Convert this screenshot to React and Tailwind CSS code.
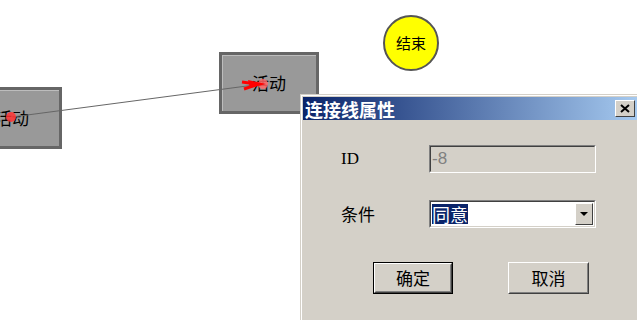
import React from 'react';

const cjk = { fontFamily: '"Noto Sans CJK SC", "Liberation Sans", sans-serif' };

const Node = ({ className }) => (
  <div
    className={`absolute w-[100px] h-[62px] bg-[#999999] border-[3px] border-[#666666] shadow-[inset_1px_1px_0_#bdbdbd] flex items-center justify-center text-[17px] text-black ${className}`}
    style={cjk}
  >
    活动
  </div>
);

const Sunken = ({ className, children }) => (
  <div className={`border border-t-[#808080] border-l-[#808080] border-b-white border-r-white ${className}`}>
    <div className="h-full w-full border border-t-[#404040] border-l-[#404040] border-b-[#d4d0c8] border-r-[#d4d0c8] flex items-center">
      {children}
    </div>
  </div>
);

const Button = ({ children, isDefault, className }) => (
  <div className={`h-[32px] ${isDefault ? 'border border-black' : ''} ${className}`}>
    <div className="h-full w-full border border-t-white border-l-white border-b-[#404040] border-r-[#404040]">
      <div className="h-full w-full border border-t-[#d4d0c8] border-l-[#d4d0c8] border-b-[#808080] border-r-[#808080] flex items-center justify-center text-[17px] text-black">
        {children}
      </div>
    </div>
  </div>
);

export default function App() {
  return (
    <div className="relative w-[637px] h-[320px] overflow-hidden bg-white" style={cjk}>
      <Node className="left-[-38px] top-[87px]" />
      <Node className="left-[219px] top-[52px]" />

      <svg className="absolute left-0 top-0" width="637" height="320">
        <line x1="12" y1="117" x2="262" y2="84" stroke="#666" strokeWidth="1" />
        <circle cx="11" cy="117" r="5" fill="#ff3333" opacity="0.85" />
        <circle cx="263" cy="84" r="5" fill="#ff6666" opacity="0.85" />
        <path d="M248 80 L266 84 L250 88 Z" fill="#ff0000" />
        <path d="M242 82 L256 84 M244 89 L256 85" stroke="#ff0000" strokeWidth="3" />
      </svg>

      <div className="absolute left-[383px] top-[15px] w-[56px] h-[56px] rounded-full bg-[#ffff00] border-2 border-[#555] flex items-center justify-center text-[15px] text-black">
        结束
      </div>

      <div className="absolute left-[300px] top-[94px] w-[342px] h-[240px] bg-[#d4d0c8] border border-t-[#d4d0c8] border-l-[#d4d0c8]">
        <div className="h-full w-full border border-t-white border-l-white border-r-[#808080] border-b-[#808080] p-[1px] flex flex-col">
          <div className="h-[23px] flex items-center justify-between pl-[2px] pr-[4px] bg-[linear-gradient(to_right,#0a246a,#a6caf0)]">
            <span className="text-white font-bold text-[18px] leading-none">连接线属性</span>
            <div className="w-[20px] h-[17px] bg-[#d4d0c8] border border-t-white border-l-white border-b-[#404040] border-r-[#404040] flex items-center justify-center">
              <svg width="10" height="9" viewBox="0 0 10 9">
                <path d="M1 1 L9 8 M9 1 L1 8" stroke="#000" strokeWidth="2" />
              </svg>
            </div>
          </div>

          <div className="flex flex-col pl-[38px] pt-[25px]">
            <div className="flex items-center h-[28px]">
              <span className="w-[88px] text-[17px] text-black" style={{ fontFamily: '"Liberation Serif", serif' }}>ID</span>
              <Sunken className="w-[167px] h-[28px] bg-[#d4d0c8]">
                <span className="pl-[1px] text-[17px] text-[#808080]" style={{ fontFamily: '"Liberation Sans", sans-serif' }}>-8</span>
              </Sunken>
            </div>

            <div className="flex items-center h-[28px] mt-[27px]">
              <span className="w-[88px] text-[17px] text-black">条件</span>
              <Sunken className="w-[167px] h-[28px] bg-white">
                <div className="flex-1 flex items-center pl-[1px]">
                  <span className="bg-[#0a246a] text-white text-[18px] leading-[20px]">同意</span>
                </div>
                <div className="w-[18px] h-[22px] mr-[1px] bg-[#d4d0c8] border border-t-white border-l-white border-b-[#404040] border-r-[#404040] flex items-center justify-center">
                  <svg width="8" height="4" viewBox="0 0 8 4">
                    <path d="M0 0 L8 0 L4 4 Z" fill="#000" />
                  </svg>
                </div>
              </Sunken>
            </div>

            <div className="flex mt-[34px]">
              <Button isDefault className="w-[80px] ml-[32px]">确定</Button>
              <Button className="w-[81px] ml-[55px]">取消</Button>
            </div>
          </div>
        </div>
      </div>
    </div>
  );
}
